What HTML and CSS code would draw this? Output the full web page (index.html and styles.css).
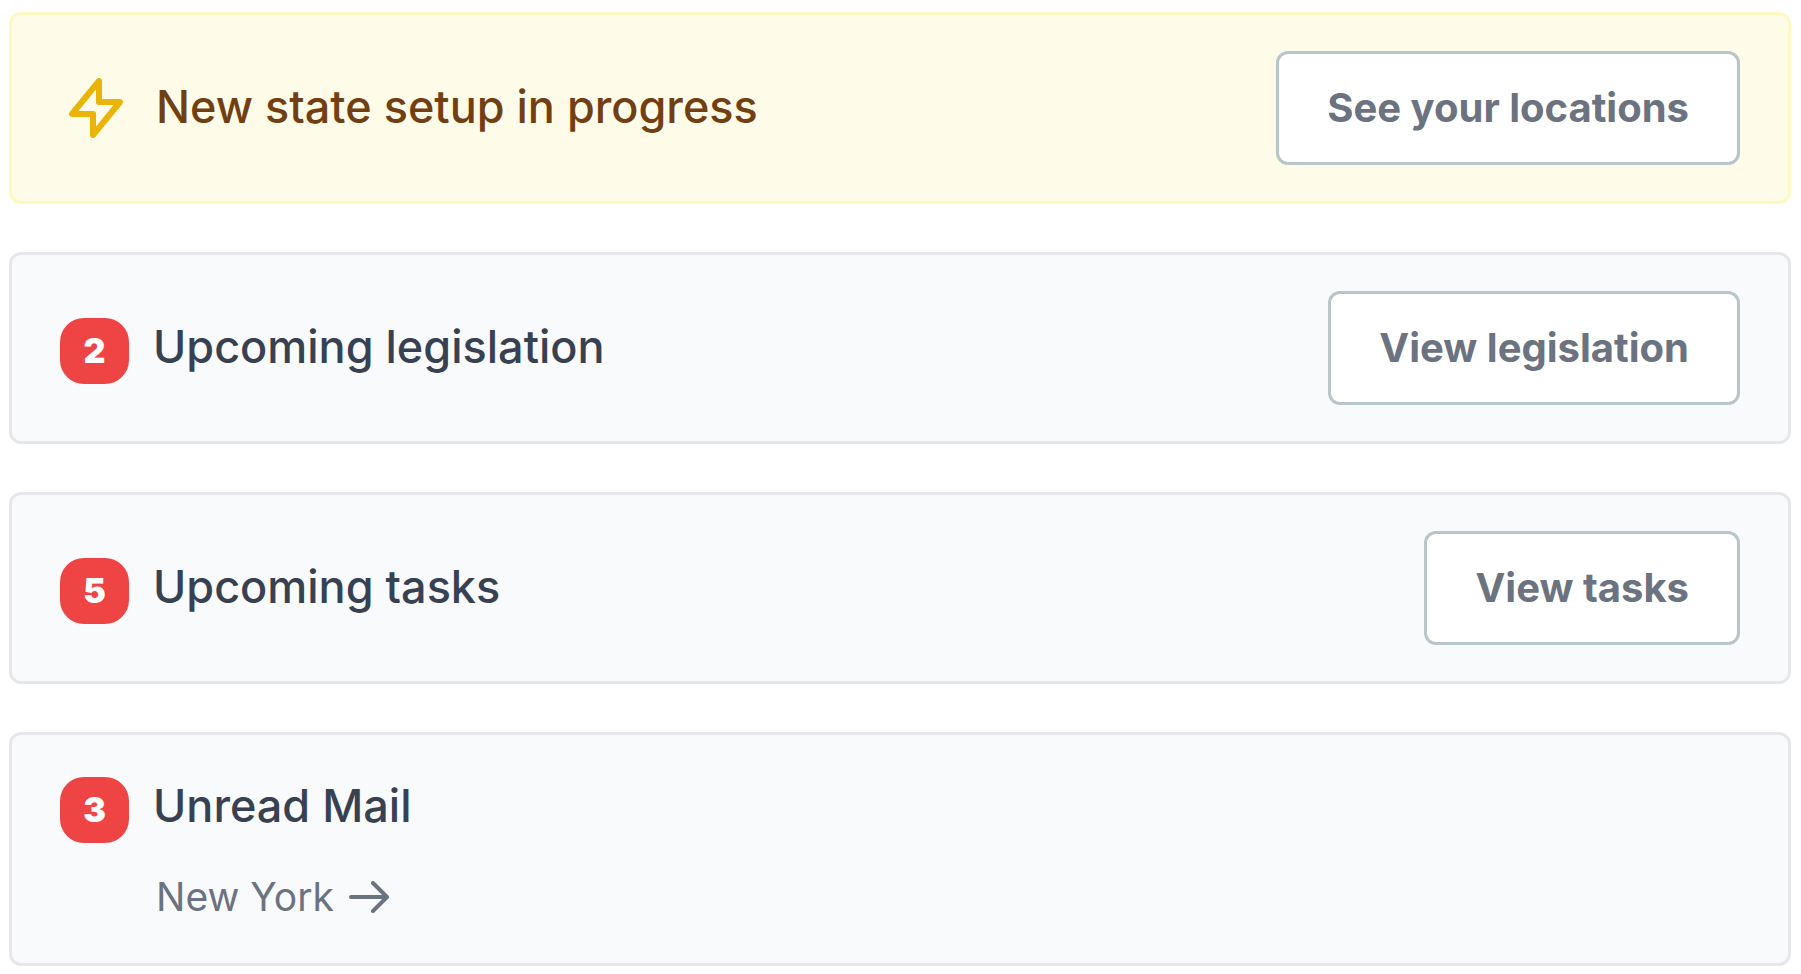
FILE: index.html
```html
<!DOCTYPE html>
<html lang="en">
<head>
<meta charset="utf-8">
<meta name="viewport" content="width=device-width, initial-scale=1">
<title>Notifications</title>
<link rel="stylesheet" href="styles.css">
</head>
<body>
<main class="notices">
  <section class="card card-warning">
    <div class="card-title">
      <svg class="bolt" viewBox="0 0 24 24" fill="none" stroke="currentColor" stroke-width="2" stroke-linecap="round" stroke-linejoin="round" aria-hidden="true"><path d="M13 10V3L4 14h7v7l9-11h-7z"/></svg>
      <h2 class="heading">New state setup in progress</h2>
    </div>
    <button class="button" type="button">See your locations</button>
  </section>
  <section class="card">
    <div class="card-title">
      <span class="badge">2</span>
      <h2 class="heading">Upcoming legislation</h2>
    </div>
    <button class="button" type="button">View legislation</button>
  </section>
  <section class="card">
    <div class="card-title">
      <span class="badge">5</span>
      <h2 class="heading">Upcoming tasks</h2>
    </div>
    <button class="button" type="button">View tasks</button>
  </section>
  <section class="card card-stacked">
    <div class="card-title">
      <span class="badge">3</span>
      <h2 class="heading">Unread Mail</h2>
    </div>
    <a class="mail-link" href="#new-york">New York
      <svg class="arrow" viewBox="0 0 40 32" fill="none" stroke="currentColor" stroke-width="4" stroke-linecap="round" stroke-linejoin="round" aria-hidden="true"><path d="M2 16h36M24 2l14 14-14 14"/></svg>
    </a>
  </section>
</main>
</body>
</html>
```
FILE: styles.css
```css
* {
  box-sizing: border-box;
}

body {
  margin: 0;
  background: #fff;
  color: #374151;
  font-family: Inter, "Liberation Sans", sans-serif;
}

.notices {
  display: flex;
  flex-direction: column;
  gap: 48px;
  padding: 12px 10px 8px 9px;
}

.card {
  display: flex;
  align-items: center;
  justify-content: space-between;
  gap: 24px;
  padding: 36px 48px;
  border: 3px solid #e5e7eb;
  border-radius: 12px;
  background: #f9fafc;
}

.card-warning {
  border-color: #fef9c3;
  background: #fefce8;
  color: #713f12;
}

.card-stacked {
  flex-direction: column;
  align-items: flex-start;
}

.card-title {
  display: flex;
  align-items: baseline;
  gap: 24px;
  min-height: 72px;
}

.heading {
  margin: 0;
  font-size: 45px;
  font-weight: 500;
  line-height: 70px;
}

.bolt {
  flex: none;
  align-self: center;
  width: 72px;
  height: 72px;
  color: #eab308;
}

.badge {
  flex: none;
  min-width: 69px;
  padding: 9px 20px;
  border-radius: 24px;
  background: #ef4444;
  color: #fff;
  font-size: 34px;
  font-weight: 900;
  line-height: 48px;
  text-align: center;
}

.button {
  flex: none;
  padding: 24px 48px;
  border: 3px solid #b8c5c9;
  border-radius: 12px;
  background: #fff;
  color: #6b7280;
  font-family: inherit;
  font-size: 40px;
  font-weight: 700;
  line-height: 60px;
  cursor: pointer;
}

.mail-link {
  display: flex;
  align-items: center;
  gap: 15px;
  padding-left: 96px;
  color: #6b7280;
  font-size: 39px;
  line-height: 60px;
  text-decoration: none;
}

.arrow {
  width: 40px;
  height: 32px;
}
```
